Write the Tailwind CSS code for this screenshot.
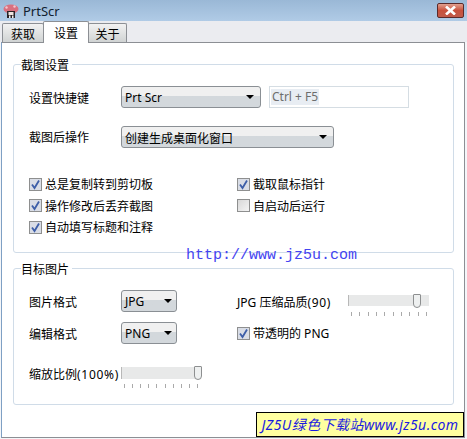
<!DOCTYPE html>
<html lang="en">
<head>
    <meta charset="UTF-8">
    <title>PrtScr</title>
    <script src="https://cdn.jsdelivr.net/npm/@tailwindcss/browser@4"></script>
</head>
<body class="w-[467px] h-[439px] overflow-hidden bg-[#f4f6f9] font-['Noto_Sans','Noto_Sans_CJK_SC',sans-serif] text-[12px] leading-[16px] text-black">
<div class="relative w-[467px] h-[439px]">
    <!-- Title bar -->
    <div class="h-[21px] flex items-center pl-[3px] bg-gradient-to-b from-[#9ab8d6] to-[#b0cbe6]">
        <svg class="w-[16px] h-[16px]" viewBox="0 0 16 16">
            <ellipse cx="8" cy="6" rx="7.5" ry="4.5" fill="#d9707f"/>
            <circle cx="3.5" cy="4.5" r="1.2" fill="#f3c6cd"/>
            <circle cx="11.5" cy="3.5" r="1.2" fill="#f3c6cd"/>
            <rect x="4" y="8" width="8" height="7" fill="#2b2326"/>
            <rect x="5.5" y="9" width="5" height="3" fill="#f0e4e0"/>
            <rect x="6" y="12.5" width="1.5" height="2.5" fill="#eee"/>
            <rect x="9" y="12.5" width="1.5" height="2.5" fill="#eee"/>
        </svg>
        <span class="ml-[4px] text-[13px] text-[#10202f]">PrtScr</span>
        <div class="absolute left-[437px] top-[3px] w-[27px] h-[15px] rounded-[2px] border border-[#5b2a2a] bg-gradient-to-b from-[#e0a090] via-[#c8503c] to-[#c05a4a] flex items-center justify-center">
            <svg class="w-[13px] h-[9px]" viewBox="0 0 13 9"><path d="M2 0.5 L11 8.5 M11 0.5 L2 8.5" stroke="#fff" stroke-width="2.6"/></svg>
        </div>
    </div>

    <!-- Tabs -->
    <div class="h-[21px] bg-[#ebecf0] flex items-end pl-[2px] relative z-10">
        <div class="w-[42px] h-[19px] border border-b-0 border-[#8c8f94] rounded-t-[2px] bg-gradient-to-b from-[#f2f2f2] to-[#d0d3d3] flex items-center justify-center mr-[-1px] pt-[3px]">获取</div>
        <div class="w-[46px] h-[22px] mb-[-1px] border border-b-0 border-[#8c8f94] rounded-t-[2px] bg-white flex items-center justify-center pt-[2px]">设置</div>
        <div class="w-[39px] h-[19px] ml-[-1px] border border-b-0 border-[#8c8f94] rounded-t-[2px] bg-gradient-to-b from-[#f2f2f2] to-[#d0d3d3] flex items-center justify-center pt-[3px]">关于</div>
    </div>

    <!-- Panel -->
    <div class="w-[464px] h-[396px] ml-px bg-white border border-l-[#7fa0c4] border-[#8c8f94] pl-[11px] pt-[21px] flex flex-col">
        <!-- 截图设置 -->
        <div class="relative w-[441px] h-[189px] border border-[#d0dce8] rounded-[3px] pl-[15px] pt-[21px]">
            <span class="absolute left-[7px] top-[-7px] bg-white pr-[3px]">截图设置</span>
            <div class="flex items-center h-[22px]">
                <span class="w-[92px] pt-[4px]">设置快捷键</span>
                <div class="w-[140px] h-[22px] border border-[#8a8f94] rounded-[3px] bg-gradient-to-b from-[#f0f0f0] from-45% to-[#d3d8dc] to-45% flex items-center justify-between pl-[3px] pr-[6px]">
                    <span class="pt-[2px]">Prt Scr</span>
                    <div class="w-0 h-0 border-x-[4px] border-x-transparent border-t-[4px] border-t-black"></div>
                </div>
                <div class="ml-[8px] w-[140px] h-[22px] border border-[#d5dde3] pl-[1px] pt-[2px] text-[#6d6d6d]"><span class="inline-block bg-[#e8edf3] px-[1px]">Ctrl + F5</span></div>
            </div>
            <div class="flex items-center h-[22px] mt-[18px]">
                <span class="w-[92px] pt-[2px]">截图后操作</span>
                <div class="w-[213px] h-[22px] border border-[#8a8f94] rounded-[3px] bg-gradient-to-b from-[#f0f0f0] from-45% to-[#d3d8dc] to-45% flex items-center justify-between pl-[3px] pr-[6px]">
                    <span class="pt-[4px]">创建生成桌面化窗口</span>
                    <div class="w-0 h-0 border-x-[4px] border-x-transparent border-t-[4px] border-t-black"></div>
                </div>
            </div>
            <div class="mt-[28px] grid grid-cols-[208px_1fr] gap-y-[5.5px]">
                <label class="flex items-center h-[16px] gap-[3px]"><span class="w-[13px] h-[13px] border border-[#8e8f8f] bg-[#d9dde6] flex items-center justify-center"><svg class="w-[11px] h-[11px]" viewBox="0 0 11 11"><path d="M2 5.5 L4.5 9 L9 1.5" fill="none" stroke="#3d5ea8" stroke-width="1.8"/></svg></span><span class="pt-[2px]">总是复制转到剪切板</span></label>
                <label class="flex items-center h-[16px] gap-[3px]"><span class="w-[13px] h-[13px] border border-[#8e8f8f] bg-[#d9dde6] flex items-center justify-center"><svg class="w-[11px] h-[11px]" viewBox="0 0 11 11"><path d="M2 5.5 L4.5 9 L9 1.5" fill="none" stroke="#3d5ea8" stroke-width="1.8"/></svg></span><span class="pt-[2px]">截取鼠标指针</span></label>
                <label class="flex items-center h-[16px] gap-[3px]"><span class="w-[13px] h-[13px] border border-[#8e8f8f] bg-[#d9dde6] flex items-center justify-center"><svg class="w-[11px] h-[11px]" viewBox="0 0 11 11"><path d="M2 5.5 L4.5 9 L9 1.5" fill="none" stroke="#3d5ea8" stroke-width="1.8"/></svg></span><span class="pt-[2px]">操作修改后丢弃截图</span></label>
                <label class="flex items-center h-[16px] gap-[3px]"><span class="w-[13px] h-[13px] border border-[#8e8f8f] bg-gradient-to-br from-[#d8d8d8] to-[#f4f4f4]"></span><span class="pt-[2px]">自启动后运行</span></label>
                <label class="flex items-center h-[16px] gap-[3px]"><span class="w-[13px] h-[13px] border border-[#8e8f8f] bg-[#d9dde6] flex items-center justify-center"><svg class="w-[11px] h-[11px]" viewBox="0 0 11 11"><path d="M2 5.5 L4.5 9 L9 1.5" fill="none" stroke="#3d5ea8" stroke-width="1.8"/></svg></span><span class="pt-[2px]">自动填写标题和注释</span></label>
            </div>
        </div>

        <!-- 目标图片 -->
        <div class="relative w-[441px] h-[137px] mt-[15px] border border-[#d0dce8] rounded-[3px] pl-[15px] pt-[21px]">
            <span class="absolute left-[7px] top-[-7px] bg-white pr-[3px]">目标图片</span>
            <div class="grid grid-cols-[208px_1fr]">
                <div>
                    <div class="flex items-center h-[22px]">
                        <span class="w-[92px] pt-[4px]">图片格式</span>
                        <div class="w-[56px] h-[22px] border border-[#8a8f94] rounded-[3px] bg-gradient-to-b from-[#f0f0f0] from-45% to-[#d3d8dc] to-45% flex items-center justify-between pl-[3px] pr-[4px]">
                            <span class="pt-[2px]">JPG</span>
                            <div class="w-0 h-0 border-x-[4px] border-x-transparent border-t-[4px] border-t-black"></div>
                        </div>
                    </div>
                    <div class="flex items-center h-[22px] mt-[10px]">
                        <span class="w-[92px] pt-[4px]">编辑格式</span>
                        <div class="w-[56px] h-[22px] border border-[#8a8f94] rounded-[3px] bg-gradient-to-b from-[#f0f0f0] from-45% to-[#d3d8dc] to-45% flex items-center justify-between pl-[3px] pr-[4px]">
                            <span class="pt-[2px]">PNG</span>
                            <div class="w-0 h-0 border-x-[4px] border-x-transparent border-t-[4px] border-t-black"></div>
                        </div>
                    </div>
                </div>
                <div>
                    <div class="flex items-start h-[22px]">
                        <span class="w-[111px] pt-[5px] whitespace-nowrap">JPG 压缩品质<span class="tracking-[0.7px]">(90)</span></span>
                        <div class="relative w-[81px] mt-[5px]">
                            <div class="h-[11px] bg-[#e8e9e9] border-l border-[#b8b8b8]"></div>
                            <div class="absolute left-[65px] top-[-1px] w-[8px] h-[14px] border border-[#8d8f90] rounded-b-[4px] rounded-t-[1px] bg-[#eef0f0]"></div>
                            <div class="flex justify-between w-[76px] ml-[3px] mt-[6px]">
                                <i class="w-px h-[4px] bg-[#aaa]"></i><i class="w-px h-[4px] bg-[#aaa]"></i><i class="w-px h-[4px] bg-[#aaa]"></i><i class="w-px h-[4px] bg-[#aaa]"></i><i class="w-px h-[4px] bg-[#aaa]"></i><i class="w-px h-[4px] bg-[#aaa]"></i><i class="w-px h-[4px] bg-[#aaa]"></i><i class="w-px h-[4px] bg-[#aaa]"></i><i class="w-px h-[4px] bg-[#aaa]"></i><i class="w-px h-[4px] bg-[#aaa]"></i>
                            </div>
                        </div>
                    </div>
                    <label class="flex items-center h-[16px] gap-[3px] mt-[13px]"><span class="w-[13px] h-[13px] border border-[#8e8f8f] bg-[#d9dde6] flex items-center justify-center"><svg class="w-[11px] h-[11px]" viewBox="0 0 11 11"><path d="M2 5.5 L4.5 9 L9 1.5" fill="none" stroke="#3d5ea8" stroke-width="1.8"/></svg></span><span class="pt-[2px]">带透明的 PNG</span></label>
                </div>
            </div>
            <div class="flex items-start mt-[21px]">
                <span class="w-[92px] pt-[2px] whitespace-nowrap">缩放比例<span class="tracking-[0.7px]">(100%)</span></span>
                <div class="relative w-[80px] mt-[2px]">
                    <div class="h-[12px] bg-[#e8e9e9] border-l border-[#b8b8b8]"></div>
                    <div class="absolute left-[73px] top-[-1px] w-[8px] h-[14px] border border-[#8d8f90] rounded-b-[4px] rounded-t-[1px] bg-[#eef0f0]"></div>
                    <div class="flex justify-between w-[74px] ml-[3px] mt-[5px]">
                        <i class="w-px h-[4px] bg-[#aaa]"></i><i class="w-px h-[4px] bg-[#aaa]"></i><i class="w-px h-[4px] bg-[#aaa]"></i><i class="w-px h-[4px] bg-[#aaa]"></i><i class="w-px h-[4px] bg-[#aaa]"></i><i class="w-px h-[4px] bg-[#aaa]"></i><i class="w-px h-[4px] bg-[#aaa]"></i><i class="w-px h-[4px] bg-[#aaa]"></i><i class="w-px h-[4px] bg-[#aaa]"></i><i class="w-px h-[4px] bg-[#aaa]"></i>
                    </div>
                </div>
            </div>
        </div>
    </div>

    <!-- Watermarks laid over the screenshot -->
    <span class="absolute left-[186px] top-[247px] font-['Liberation_Mono',monospace] text-[15px] leading-[18px] text-[#4444f0]">http://www.jz5u.com</span>
    <div class="absolute left-[256px] top-[412px] w-[208px] h-[25px] bg-[#ffffa0] border border-black flex items-center justify-center italic text-[14px] tracking-[0.45px] text-[#1a1ae0] whitespace-nowrap">JZ5U绿色下载站www.jz5u.com</div>
</div>
</body>
</html>
